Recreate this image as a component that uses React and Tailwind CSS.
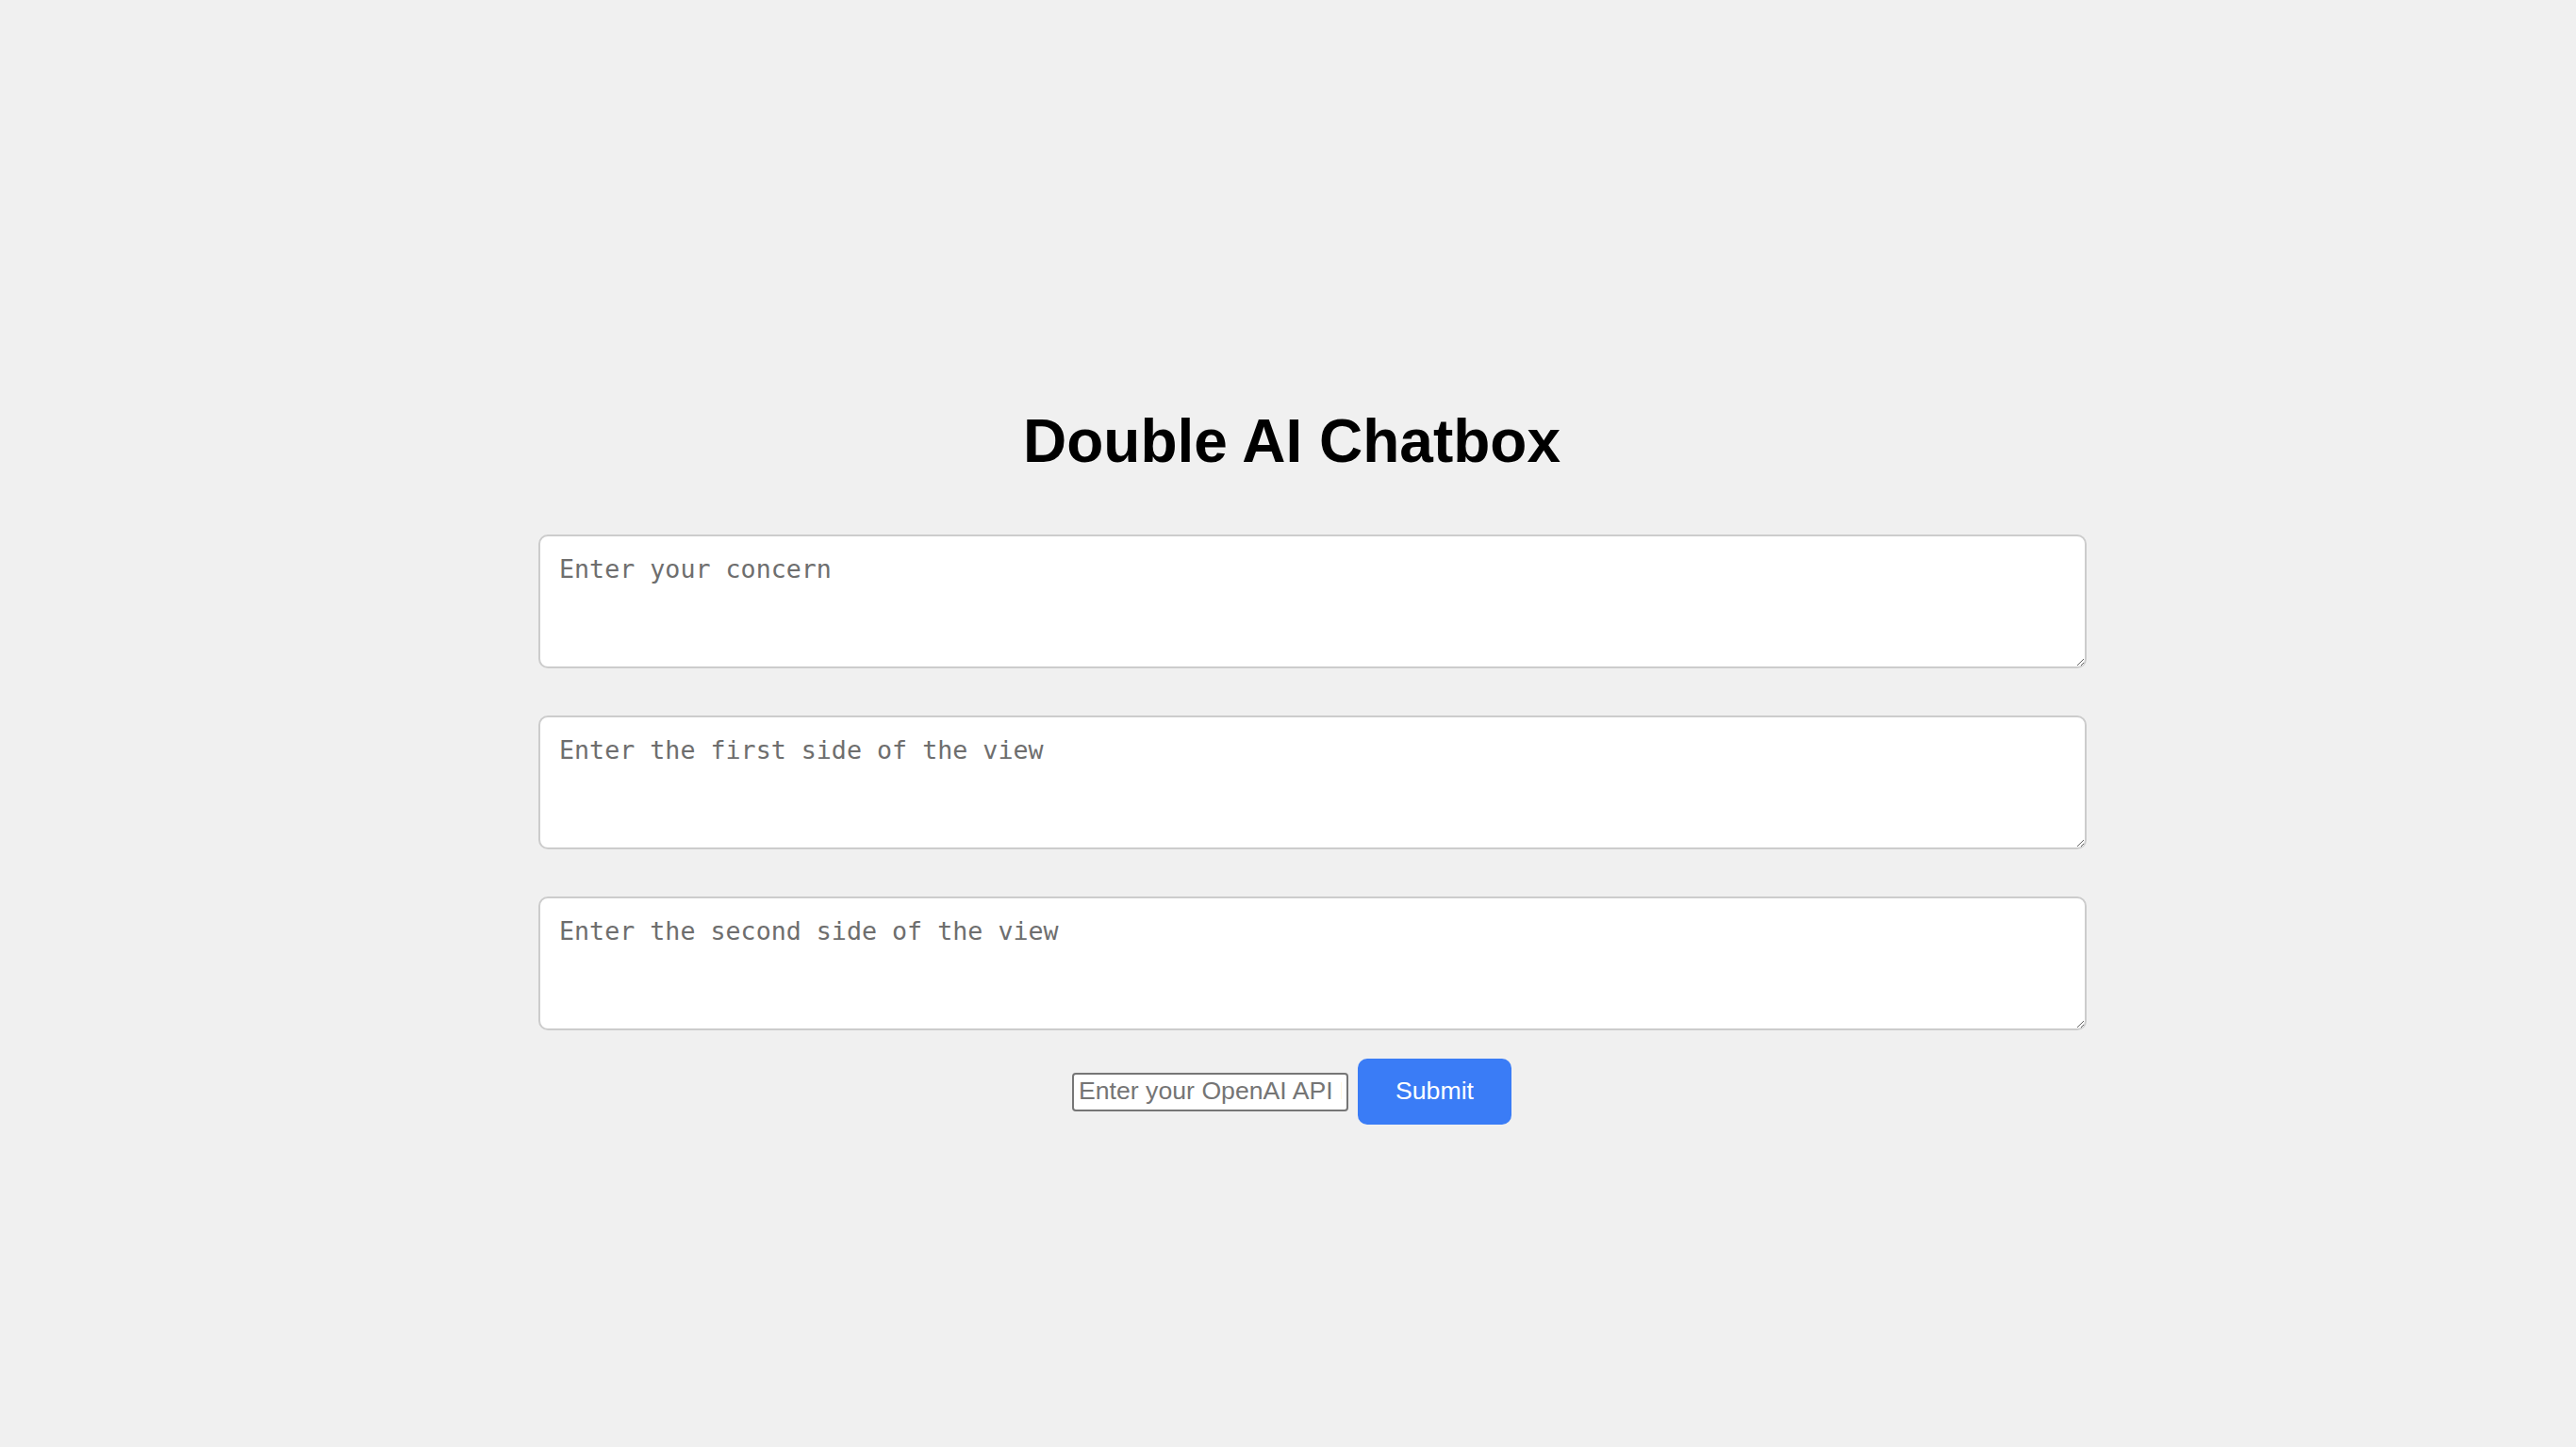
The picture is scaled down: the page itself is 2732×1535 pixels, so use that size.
import { useState } from 'react'

const fields = [
  { name: 'concern', placeholder: 'Enter your concern' },
  { name: 'first', placeholder: 'Enter the first side of the view' },
  { name: 'second', placeholder: 'Enter the second side of the view' },
]

const App = () => {
  const [values, setValues] = useState({ concern: '', first: '', second: '' })
  const [apiKey, setApiKey] = useState('')

  return (
    <div className="flex min-h-screen flex-col items-center bg-[#f0f0f0] pt-[431px] font-['Liberation_Sans',Arial,sans-serif]">
      <h1 className="ml-[8px] text-[64px] font-bold leading-[74px] text-black">Double AI Chatbox</h1>

      <div className="ml-[52px] mt-[62px] flex w-[1642px] flex-col gap-[50px]">
        {fields.map((f) => (
          <textarea
            key={f.name}
            value={values[f.name]}
            onChange={(e) => setValues({ ...values, [f.name]: e.target.value })}
            placeholder={f.placeholder}
            className="block h-[142px] w-full rounded-[10px] border-2 border-[#cccccc] bg-white px-[20px] pb-[20px] pt-[15px] font-['DejaVu_Sans_Mono',monospace] text-[26.67px] text-black placeholder:text-[#6e6e6e]"
          />
        ))}
      </div>

      <div className="ml-[8px] mt-[30px] flex items-center gap-[10px]">
        <input
          type="text"
          value={apiKey}
          onChange={(e) => setApiKey(e.target.value)}
          placeholder="Enter your OpenAI API Key"
          className="h-[41px] w-[293px] rounded-[4px] border-2 border-[#767676] bg-white px-[5px] pb-[2px] text-[26.67px] text-black placeholder:text-[#757575]"
        />
        <button className="h-[70px] w-[163px] rounded-[10px] bg-[#3a7cf6] pb-[2px] text-[26.67px] text-white">
          Submit
        </button>
      </div>
    </div>
  )
}
export default App
